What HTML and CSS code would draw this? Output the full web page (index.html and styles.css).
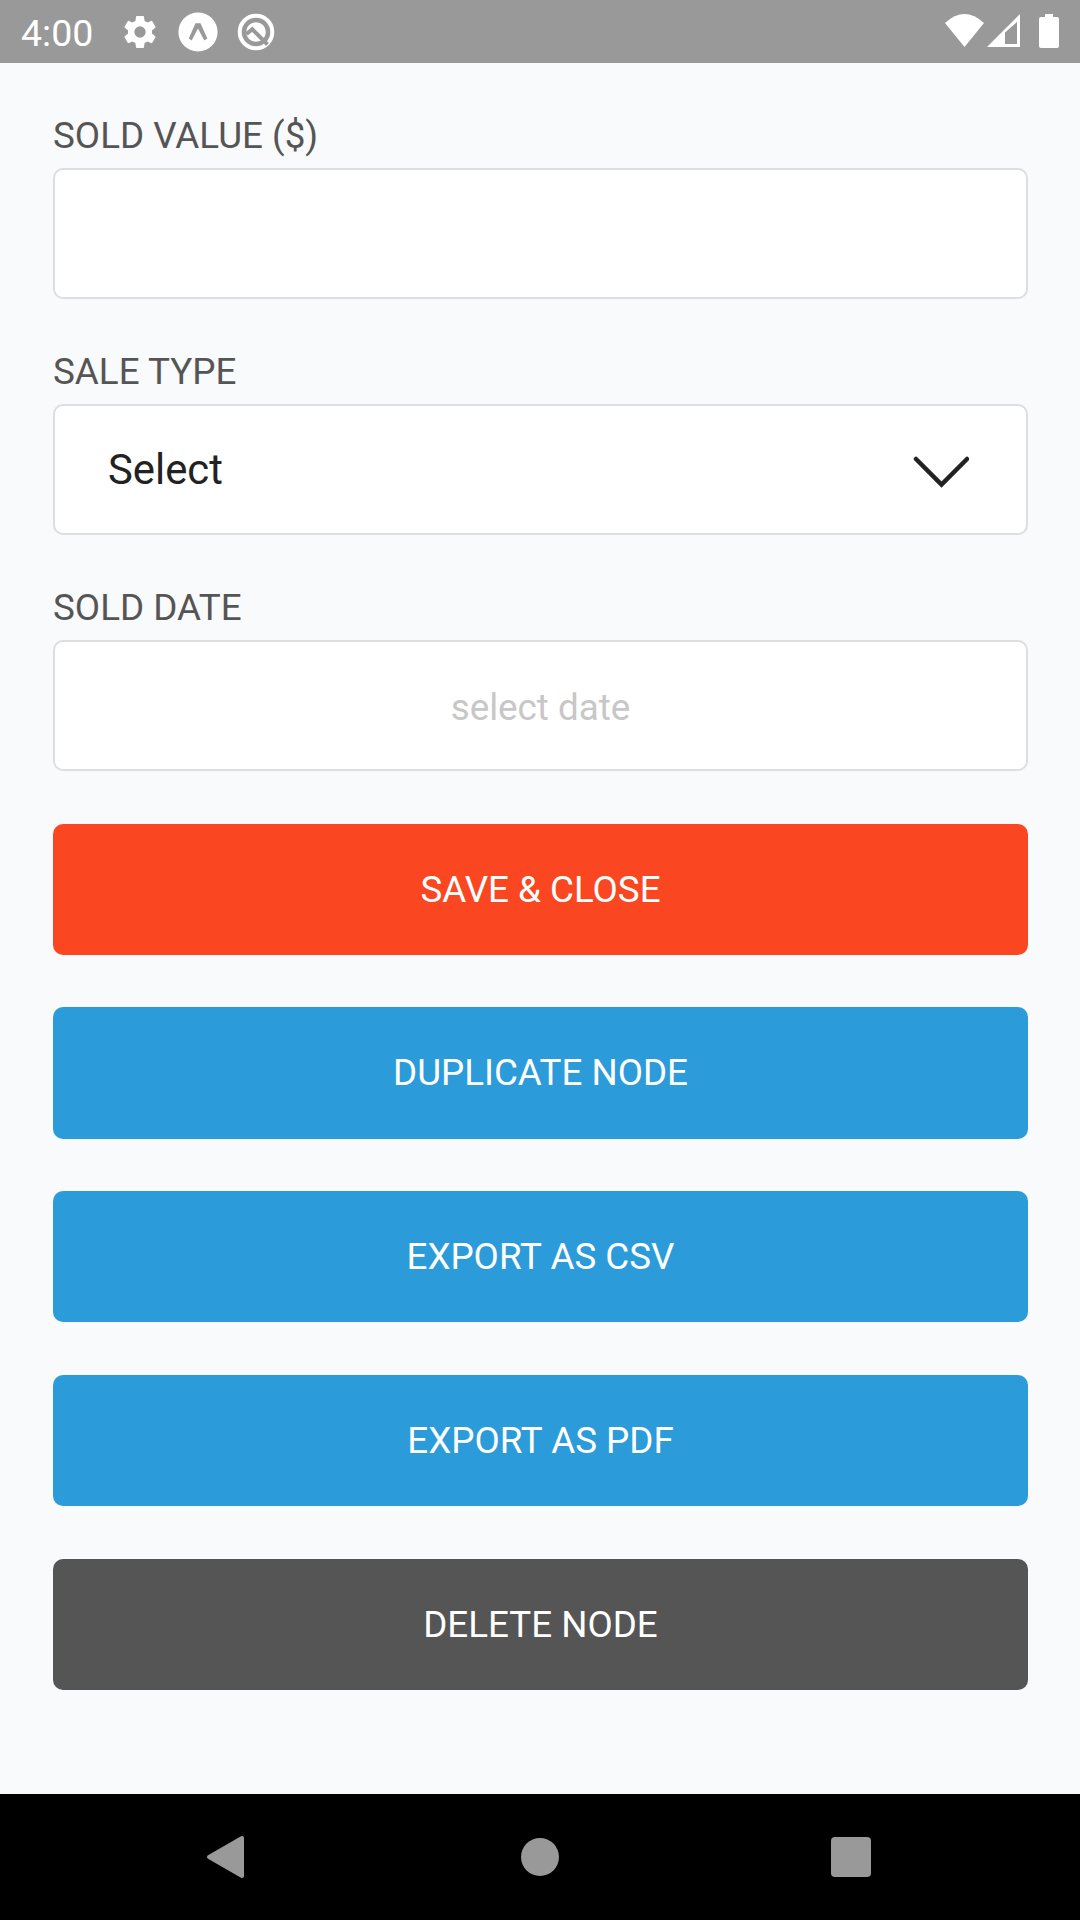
FILE: index.html
```html
<!DOCTYPE html>
<html lang="en">

<head>
  <meta charset="UTF-8" />
  <meta name="viewport" content="width=device-width, initial-scale=1.0" />
  <title>Edit Node</title>
  <link rel="stylesheet" href="styles.css">
</head>

<body>
  <header class="status-bar">
    <span class="clock">4:00</span>
    <svg class="status-icon" viewBox="0 0 24 24"><path fill="#fff" d="M19.14 12.94c.04-.3.06-.61.06-.94s-.02-.64-.07-.94l2.03-1.58c.18-.14.23-.41.12-.61l-1.92-3.32c-.12-.22-.37-.29-.59-.22l-2.39.96c-.5-.38-1.03-.7-1.62-.94l-.36-2.54c-.04-.24-.24-.41-.48-.41h-3.84c-.24 0-.43.17-.47.41l-.36 2.54c-.59.24-1.13.57-1.62.94l-2.39-.96c-.22-.08-.47 0-.59.22L2.74 8.87c-.12.21-.08.47.12.61l2.03 1.58c-.05.3-.09.63-.09.94s.02.64.07.94l-2.03 1.58c-.18.14-.23.41-.12.61l1.92 3.32c.12.22.37.29.59.22l2.39-.96c.5.38 1.03.7 1.62.94l.36 2.54c.05.24.24.41.48.41h3.84c.24 0 .44-.17.47-.41l.36-2.54c.59-.24 1.13-.56 1.62-.94l2.39.96c.22.08.47 0 .59-.22l1.92-3.32c.12-.22.07-.47-.12-.61l-2.01-1.58zM12 15.4A3.4 3.4 0 1 1 12 8.6a3.4 3.4 0 0 1 0 6.8z"/></svg>
    <svg class="status-icon" viewBox="0 0 40 40"><circle cx="20" cy="20" r="19.600" fill="#fff"/><path d="M17.500 11.300H22.500L29.300 26.500L26.300 28.500L20 16.500L13.700 28.500L10.700 26.500z" fill="#999"/></svg>
    <svg class="status-icon" viewBox="0 0 40 40"><circle cx="20" cy="20" r="16.300" fill="none" stroke="#fff" stroke-width="4"/><circle cx="20" cy="20" r="9.800" fill="#fff"/><path d="M10.500 22L16.300 17.300L31.500 32.500" fill="none" stroke="#999" stroke-width="4"/></svg>
    <svg class="signals" viewBox="940 0 120 63">
      <path fill="#fff" d="M945 23Q964.500 5 984 23L964.500 47z"/>
      <path fill="#fff" fill-rule="evenodd" d="M987 47L1020 14V47zM1005 32.500V44H1017V22z"/>
      <path fill="#fff" d="M1045 14h8v3h4q2 0 2 2v27q0 2-2 2h-16q-2 0-2-2v-27q0-2 2-2h4z"/>
    </svg>
  </header>

  <main class="form">
    <div class="field">
      <label>SOLD VALUE ($)</label>
      <div class="control"></div>
    </div>
    <div class="field">
      <label>SALE TYPE</label>
      <div class="control select">Select
        <svg class="chevron" viewBox="0 0 56 32"><path d="M3 3L28.500 28.500L54 3" fill="none" stroke="#222" stroke-width="4.500" stroke-linecap="round"/></svg>
      </div>
    </div>
    <div class="field">
      <label>SOLD DATE</label>
      <div class="control date">select date</div>
    </div>
    <button class="btn btn-save">SAVE &amp; CLOSE</button>
    <button class="btn">DUPLICATE NODE</button>
    <button class="btn">EXPORT AS CSV</button>
    <button class="btn">EXPORT AS PDF</button>
    <button class="btn btn-delete">DELETE NODE</button>
  </main>

  <nav class="nav-bar">
    <svg viewBox="0 0 1080 126"><path fill="#999" stroke="#999" stroke-width="4" stroke-linejoin="round" d="M209 63L242 44V82z"/><circle cx="540" cy="63" r="19" fill="#999"/><rect x="831" y="43" width="40" height="40" rx="4" fill="#999"/></svg>
  </nav>
</body>

</html>
```
FILE: styles.css
```css
* {
  box-sizing: border-box;
  margin: 0;
  padding: 0;
}

body {
  font-family: Roboto, sans-serif;
  background: #f9fafc;
  height: 1920px;
  display: flex;
  flex-direction: column;
}

.status-bar {
  height: 63px;
  background: #999;
  color: #fff;
  display: flex;
  align-items: center;
  padding: 0 20px 0 21px;
}

.clock {
  font-size: 37.5px;
  width: 99px;
  padding-top: 3px;
}

.status-icon {
  width: 40px;
  height: 40px;
  margin-right: 18px;
}

.signals {
  width: 120px;
  height: 63px;
  margin-left: auto;
}

.form {
  flex: 1;
  padding: 52.25px 52px 0 53px;
}

.field {
  margin-bottom: 52.5px;
}

.field label {
  display: block;
  height: 52.35px;
  line-height: 41px;
  font-size: 36.8px;
  color: #555;
}

.control {
  height: 131.25px;
  border: 2px solid #dcdedf;
  border-radius: 10px;
  background: #fff;
  display: flex;
  align-items: center;
}

.select {
  justify-content: space-between;
  padding: 0 57px 0 53px;
  font-size: 41.8px;
  color: #222;
}

.chevron {
  width: 56px;
  height: 32px;
  margin-top: 5px;
}

.date {
  justify-content: center;
  padding-top: 5px;
  font-size: 36.8px;
  color: #c7c7c7;
}

.btn {
  display: block;
  width: 100%;
  height: 131.25px;
  margin-bottom: 52.5px;
  border: none;
  border-radius: 10px;
  background: #2b9bda;
  color: #fff;
  font-family: inherit;
  font-size: 36.75px;
}

.btn-save {
  background: #fa4721;
}

.btn-delete {
  background: #555;
}

.nav-bar {
  height: 126px;
  background: #000;
}

.nav-bar svg {
  display: block;
  width: 100%;
  height: 126px;
}
```
